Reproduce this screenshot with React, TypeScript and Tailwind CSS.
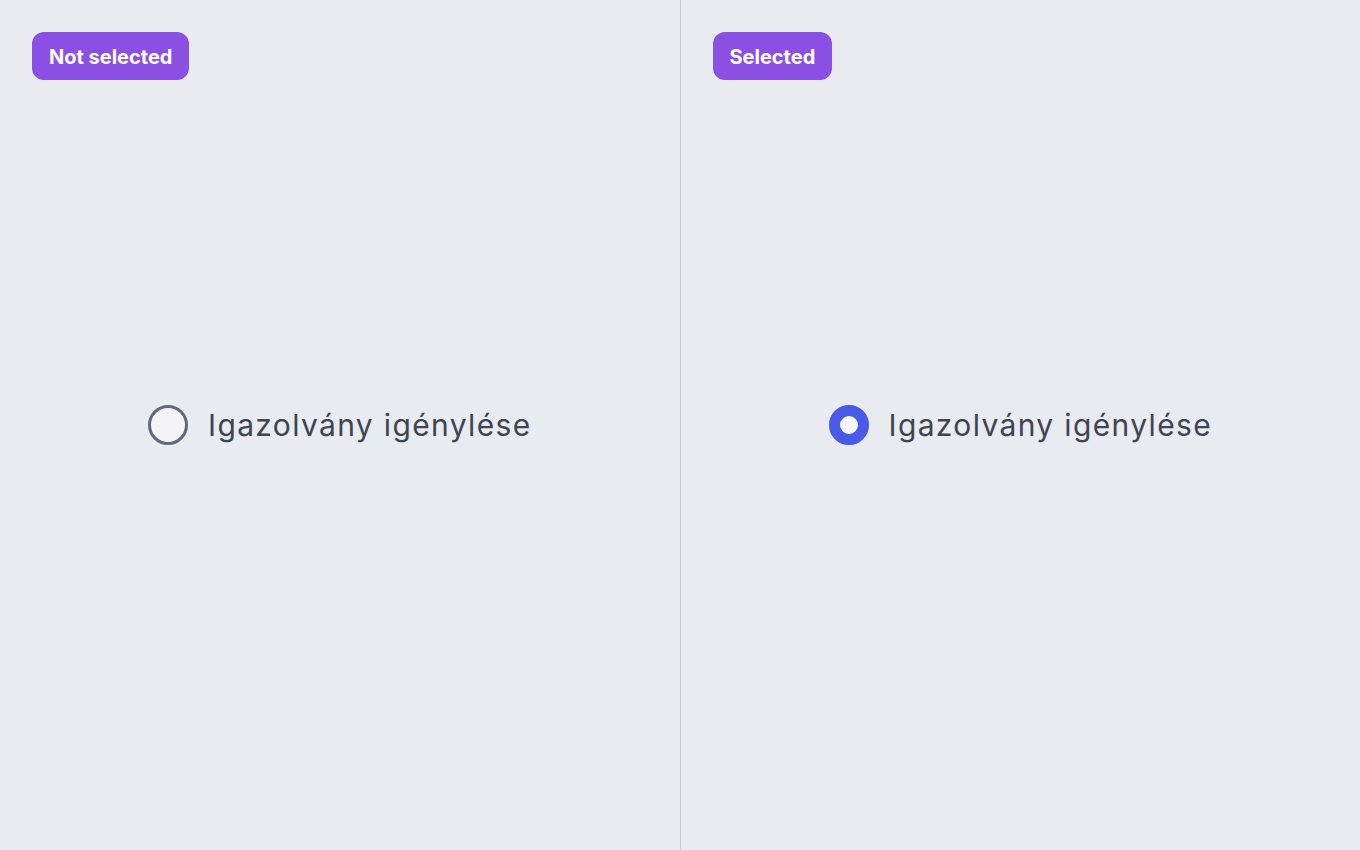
const font = { fontFamily: "Inter, 'Noto Sans', sans-serif" };

function Radio({ checked }: { checked: boolean }) {
  return checked ? (
    <span className="w-10 h-10 rounded-full border-[11px] border-[#4a5ae8] bg-[#f8f9fb] shrink-0" />
  ) : (
    <span className="w-10 h-10 rounded-full border-[3px] border-[#646a75] bg-[#f3f4f6] shrink-0" />
  );
}

function Panel({ label, checked }: { label: string; checked: boolean }) {
  return (
    <div className="flex-1 flex flex-col p-8 h-full">
      <div>
        <span className="inline-flex items-center h-12 px-[17px] pt-0.5 rounded-xl bg-[#8b4fe3] text-white text-[20px] font-bold">
          {label}
        </span>
      </div>
      <div className="flex-1 flex items-center justify-center -mt-12">
        <label className="flex items-center gap-5">
          <Radio checked={checked} />
          <span className="text-[30px] text-[#3f4451] leading-none pb-px tracking-[0.045em]">Igazolvány igénylése</span>
        </label>
      </div>
    </div>
  );
}

export default function App() {
  return (
    <div className="w-[1360px] h-[850px] flex bg-[#e8ebf0]" style={font}>
      <Panel label="Not selected" checked={false} />
      <div className="w-px bg-[#c6cad1]" />
      <Panel label="Selected" checked={true} />
    </div>
  );
}
